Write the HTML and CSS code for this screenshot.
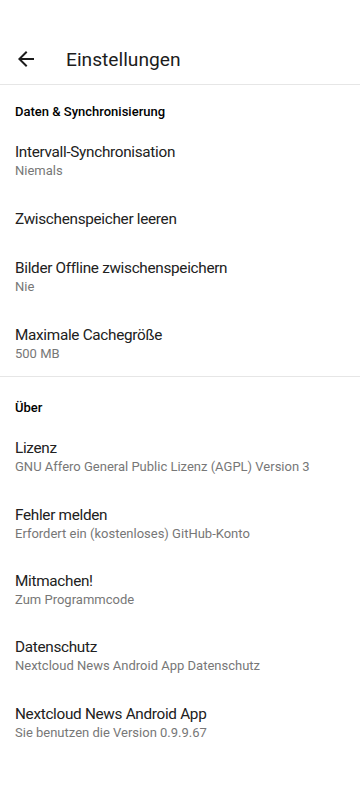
FILE: index.html
```html
<!DOCTYPE html>
<html lang="de">
<head>
    <meta charset="UTF-8">
    <meta name="viewport" content="width=device-width, initial-scale=1.0">
    <title>Einstellungen</title>
    <link rel="stylesheet" href="styles.css">
</head>
<body>
    <div class="status-bar"></div>
    <div class="toolbar">
        <svg class="back-icon" viewBox="0 0 24 24" width="24" height="24">
            <path d="M20 11H7.83l5.59-5.59L12 4l-8 8 8 8 1.41-1.41L7.83 13H20v-2z"/>
        </svg>
        <h1 class="toolbar-title">Einstellungen</h1>
    </div>

    <div class="section">
        <p class="category first">Daten &amp; Synchronisierung</p>
        <div class="pref">
            <p class="pref-title">Intervall-Synchronisation</p>
            <p class="pref-summary">Niemals</p>
        </div>
        <div class="pref single">
            <p class="pref-title">Zwischenspeicher leeren</p>
        </div>
        <div class="pref">
            <p class="pref-title">Bilder Offline zwischenspeichern</p>
            <p class="pref-summary">Nie</p>
        </div>
        <div class="pref">
            <p class="pref-title">Maximale Cachegröße</p>
            <p class="pref-summary">500 MB</p>
        </div>
    </div>

    <div class="section divided">
        <p class="category">Über</p>
        <div class="pref">
            <p class="pref-title">Lizenz</p>
            <p class="pref-summary">GNU Affero General Public Lizenz (AGPL) Version 3</p>
        </div>
        <div class="pref">
            <p class="pref-title">Fehler melden</p>
            <p class="pref-summary">Erfordert ein (kostenloses) GitHub-Konto</p>
        </div>
        <div class="pref">
            <p class="pref-title">Mitmachen!</p>
            <p class="pref-summary">Zum Programmcode</p>
        </div>
        <div class="pref">
            <p class="pref-title">Datenschutz</p>
            <p class="pref-summary">Nextcloud News Android App Datenschutz</p>
        </div>
        <div class="pref">
            <p class="pref-title">Nextcloud News Android App</p>
            <p class="pref-summary">Sie benutzen die Version 0.9.9.67</p>
        </div>
    </div>
</body>
</html>
```

FILE: styles.css
```css
body {
    margin: 0;
    background-color: #fff;
    font-family: Roboto, "Noto Sans", sans-serif;
    color: #212121;
}
p {
    margin: 0;
}
.status-bar {
    height: 34px;
}
.toolbar {
    display: flex;
    align-items: center;
    height: 50px;
    border-bottom: 1px solid #e6e6e6;
}
.back-icon {
    margin-left: 14px;
    fill: #1c1c1c;
}
.toolbar-title {
    margin: 0 0 0 28px;
    font-size: 19.2px;
    font-weight: 400;
    color: #1c1c1c;
}
.category {
    padding: 23px 15px 7px;
    font-size: 13px;
    font-weight: 500;
    line-height: 16px;
    color: #000;
}
.category.first {
    padding-top: 19px;
}
.divided {
    border-top: 1px solid #e6e6e6;
}
.pref {
    padding: 16px 15px 13.4px;
}
.pref.single {
    padding: 16.5px 15px 15.5px;
}
.pref-title {
    font-size: 15.3px;
    letter-spacing: -0.3px;
    line-height: 18px;
    color: #212121;
}
.pref-summary {
    font-size: 13px;
    line-height: 19px;
    color: #777;
}
```
